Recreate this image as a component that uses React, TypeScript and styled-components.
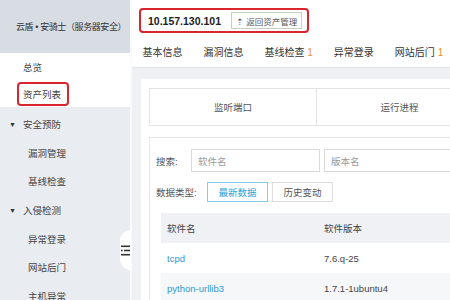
import React from 'react';
import styled, { createGlobalStyle } from 'styled-components';

const GlobalStyle = createGlobalStyle`
    body {
        margin: 0;
        font-family: "Liberation Sans", "Noto Sans CJK SC", sans-serif;
        color: #333;
        overflow: hidden;
    }
`;

const Shell = styled.div`
    display: flex;
    width: 450px;
    height: 300px;
    overflow: hidden;
`;

const Sidebar = styled.div`
    position: relative;
    width: 130px;
    flex-shrink: 0;
    background: #e9ecf1;
`;

const SideHeader = styled.div`
    height: 53px;
    display: flex;
    align-items: center;
    padding-left: 16px;
    background: #d8dce3;
    font-size: 9px;
    letter-spacing: -0.4px;
    color: #333;
    white-space: nowrap;
`;

const TopItems = styled.div`
    background: #fff;
`;

const Groups = styled.div`
    padding-top: 3px;
`;

const NavItem = styled.div<{ $indent?: number; $h?: number }>`
    height: ${(p) => p.$h ?? 28.6}px;
    display: flex;
    align-items: center;
    padding-left: ${(p) => p.$indent ?? 23}px;
    font-size: 9.5px;
    color: #444;
    position: relative;
`;

const Caret = styled.span`
    position: absolute;
    left: 9px;
    font-size: 7px;
    color: #333;
`;

const RedMark = styled.span`
    border: 2px solid #d9252d;
    border-radius: 4px;
    padding: 3px 6px 3px 4px;
    margin-left: -6px;
`;

const Handle = styled.div`
    position: absolute;
    right: -1px;
    top: 230px;
    width: 11px;
    height: 40px;
    background: #fff;
    border-radius: 11px 0 0 11px;
    display: flex;
    align-items: center;
    justify-content: flex-end;
    padding-right: 1px;
    box-sizing: border-box;
`;

const Main = styled.div`
    flex: 1;
    min-width: 0;
    display: flex;
    flex-direction: column;
    background: #eef0f3;
    border-left: 2px solid #f9fafb;
`;

const TopBar = styled.div`
    background: #fff;
    padding-top: 8px;
`;

const IpBox = styled.div`
    display: inline-flex;
    align-items: center;
    height: 25px;
    box-sizing: border-box;
    margin-left: 7px;
    border: 2px solid #d9252d;
    border-radius: 4px;
    padding: 0 5px 0 7px;
    gap: 10px;
`;

const Ip = styled.span`
    font-size: 10.5px;
    font-weight: bold;
    color: #222;
`;

const BackButton = styled.span`
    display: inline-flex;
    align-items: center;
    height: 15px;
    padding: 0 4px;
    border: 1px solid #ccc;
    font-size: 8.5px;
    color: #555;
    white-space: nowrap;
    gap: 3px;
`;

const Tabs = styled.div`
    display: flex;
    height: 31px;
    margin-top: 3px;
    align-items: center;
    border-bottom: 1px solid #e2e4e8;
    white-space: nowrap;
`;

const Tab = styled.div`
    padding: 0 10.5px;
    font-size: 10px;
    color: #333;
`;

const Count = styled.span`
    color: #f0902a;
`;

const Content = styled.div`
    flex: 1;
    padding: 11px 0 0 9px;
    overflow: hidden;
`;

const Card = styled.div`
    width: 400px;
    height: 100%;
    background: #fff;
    padding: 9px 0 0 8px;
    box-sizing: border-box;
`;

const SubTabs = styled.div`
    display: grid;
    grid-template-columns: 166px 166px;
    height: 38px;
    border: 1px solid #e3e3e3;
    box-sizing: border-box;
`;

const SubTab = styled.div`
    display: flex;
    align-items: center;
    justify-content: center;
    font-size: 9.5px;
    color: #555;
    & + & {
        border-left: 1px solid #e3e3e3;
    }
`;

const Panel = styled.div`
    margin-top: 11px;
    border: 1px solid #e6e6e6;
    padding: 11px 0 0 6px;
    height: 200px;
`;

const FormRow = styled.div<{ $top?: number }>`
    display: flex;
    align-items: center;
    margin-top: ${(p) => p.$top ?? 0}px;
    gap: 4px;
`;

const Label = styled.span<{ $w: number }>`
    width: ${(p) => p.$w}px;
    margin-right: -4px;
    font-size: 9.5px;
    color: #555;
    white-space: nowrap;
`;

const Input = styled.div`
    width: 129px;
    height: 23px;
    box-sizing: border-box;
    border: 1px solid #d9d9d9;
    display: flex;
    align-items: center;
    padding-left: 6px;
    font-size: 9.5px;
    color: #999;
`;

const TypeButton = styled.div<{ $active?: boolean }>`
    width: 61px;
    height: 20px;
    box-sizing: border-box;
    display: flex;
    align-items: center;
    justify-content: center;
    font-size: 9.5px;
    border: 1px solid ${(p) => (p.$active ? '#8ccbe8' : '#dedede')};
    color: ${(p) => (p.$active ? '#2e9fd6' : '#555')};
`;

const Table = styled.div`
    margin: 11px 0 0 5px;
`;

const TRow = styled.div<{ $bg: string }>`
    display: grid;
    grid-template-columns: 157px 1fr;
    height: 30px;
    align-items: center;
    background: ${(p) => p.$bg};
    font-size: 9.5px;
`;

const Cell = styled.div<{ $link?: boolean }>`
    padding-left: 6px;
    color: ${(p) => (p.$link ? '#2e97d4' : '#444')};
`;

const ListIcon = () => (
    <svg width="9" height="11" viewBox="0 0 9 11">
        <rect x="0" y="0.5" width="9" height="1.6" fill="#333" />
        <rect x="0" y="4.7" width="1.6" height="1.6" fill="#333" />
        <rect x="3" y="4.7" width="6" height="1.6" fill="#333" />
        <rect x="0" y="8.9" width="9" height="1.6" fill="#333" />
    </svg>
);

const software = [
    { name: 'tcpd', version: '7.6.q-25' },
    { name: 'python-urllib3', version: '1.7.1-1ubuntu4' },
];

const App = () => (
    <Shell>
        <GlobalStyle />
        <Sidebar>
            <SideHeader>云盾 • 安骑士（服务器安全）</SideHeader>
            <TopItems>
                <NavItem $h={27}>总览</NavItem>
                <NavItem $h={27}>
                    <RedMark>资产列表</RedMark>
                </NavItem>
            </TopItems>
            <Groups>
                <NavItem>
                    <Caret>▼</Caret>安全预防
                </NavItem>
                <NavItem $indent={28}>漏洞管理</NavItem>
                <NavItem $indent={28}>基线检查</NavItem>
                <NavItem>
                    <Caret>▼</Caret>入侵检测
                </NavItem>
                <NavItem $indent={28}>异常登录</NavItem>
                <NavItem $indent={28}>网站后门</NavItem>
                <NavItem $indent={28}>主机异常</NavItem>
            </Groups>
            <Handle>
                <ListIcon />
            </Handle>
        </Sidebar>
        <Main>
            <TopBar>
                <IpBox>
                    <Ip>10.157.130.101</Ip>
                    <BackButton>⇡ 返回资产管理</BackButton>
                </IpBox>
                <Tabs>
                    <Tab>基本信息</Tab>
                    <Tab>漏洞信息</Tab>
                    <Tab>
                        基线检查 <Count>1</Count>
                    </Tab>
                    <Tab>异常登录</Tab>
                    <Tab>
                        网站后门 <Count>1</Count>
                    </Tab>
                </Tabs>
            </TopBar>
            <Content>
                <Card>
                    <SubTabs>
                        <SubTab>监听端口</SubTab>
                        <SubTab>运行进程</SubTab>
                    </SubTabs>
                    <Panel>
                        <FormRow>
                            <Label $w={35}>搜索:</Label>
                            <Input>软件名</Input>
                            <Input>版本名</Input>
                        </FormRow>
                        <FormRow $top={10}>
                            <Label $w={51}>数据类型:</Label>
                            <TypeButton $active>最新数据</TypeButton>
                            <TypeButton>历史变动</TypeButton>
                        </FormRow>
                        <Table>
                            <TRow $bg="#f0f1f4">
                                <Cell>软件名</Cell>
                                <Cell>软件版本</Cell>
                            </TRow>
                            {software.map((s, i) => (
                                <TRow key={s.name} $bg={i % 2 ? '#f6f7f9' : '#fff'}>
                                    <Cell $link>{s.name}</Cell>
                                    <Cell>{s.version}</Cell>
                                </TRow>
                            ))}
                        </Table>
                    </Panel>
                </Card>
            </Content>
        </Main>
    </Shell>
);

export default App;
